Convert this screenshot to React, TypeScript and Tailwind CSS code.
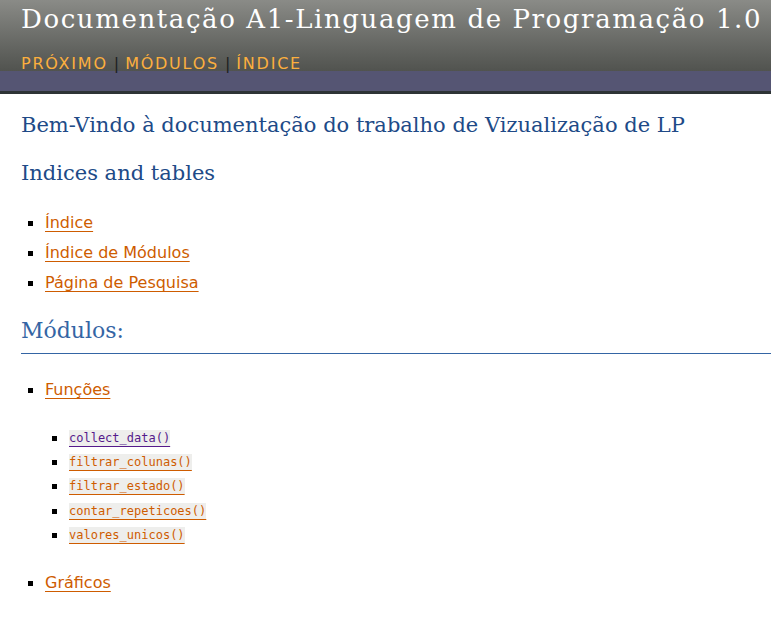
import React from "react";

// --- data ---
const NAV = ["PRÓXIMO", "MÓDULOS", "ÍNDICE"];

const INDICES = ["Índice", "Índice de Módulos", "Página de Pesquisa"];

const FUNCOES = [
  { name: "collect_data()", visited: true },
  { name: "filtrar_colunas()", visited: false },
  { name: "filtrar_estado()", visited: false },
  { name: "contar_repeticoes()", visited: false },
  { name: "valores_unicos()", visited: false },
];

const GRAFICOS = [{ name: "grafico_barras()", visited: false }];

const serif = "font-['DejaVu_Serif',Georgia,serif]";
const sans = "font-['DejaVu_Sans',Verdana,sans-serif]";
const mono = "font-['DejaVu_Sans_Mono',Consolas,monospace]";

const Bullet = () => <span className="inline-block w-[5px] h-[5px] bg-black shrink-0" />;

const CodeList = ({ items }: { items: { name: string; visited: boolean }[] }) => (
  <ul className="mt-[21px] pl-[31px]">
    {items.map((it) => (
      <li key={it.name} className="flex items-center gap-[12px] h-[24.3px]">
        <Bullet />
        <a
          href="#"
          className={`${mono} text-[12px] leading-[17px] bg-[#eeeeec] underline underline-offset-[4px] ${
            it.visited ? "text-[#551a8b]" : "text-[#ce5c00]"
          }`}
        >
          {it.name}
        </a>
      </li>
    ))}
  </ul>
);

const LinkItem = ({ children }: { children: React.ReactNode }) => (
  <li className="flex items-center gap-[12px] h-[30px] pl-[7px]">
    <Bullet />
    <a href="#" className={`${sans} text-[16px] text-[#ce5c00] underline underline-offset-[3px]`}>
      {children}
    </a>
  </li>
);

export default function App() {
  return (
    <div className="min-h-screen bg-white overflow-hidden">
      {/* header */}
      <header>
        <div className="bg-gradient-to-b from-[#8a8b87] to-[#51534f] px-[21px] pt-[1px] h-[71px]">
          <h1 className={`${serif} text-[26px] leading-[36px] tracking-[1.6px] text-white whitespace-nowrap`}>
            Documentação A1-Linguagem de Programação 1.0
          </h1>
          <nav className={`${sans} mt-[17px] text-[16px] leading-[20px] tracking-[0.11em] text-[#fcaf3e] flex items-center`}>
            {NAV.map((n, i) => (
              <React.Fragment key={n}>
                {i > 0 && <span className="text-[#1c1f22] px-[6px] tracking-normal">|</span>}
                <a href="#">{n}</a>
              </React.Fragment>
            ))}
          </nav>
        </div>
        <div className="h-[20px] bg-[#555573]" />
        <div className="h-[3px] bg-[#2e3436]" />
      </header>

      {/* body */}
      <main className="pl-[21px]">
        <h1 className={`${serif} mt-[16px] text-[21px] leading-[30px] text-[#204a87] whitespace-nowrap`}>
          Bem-Vindo à documentação do trabalho de Vizualização de LP
        </h1>

        <h2 className={`${serif} mt-[18px] text-[21px] leading-[30px] text-[#204a87]`}>Indices and tables</h2>

        <ul className="mt-[20px]">
          {INDICES.map((t) => (
            <LinkItem key={t}>{t}</LinkItem>
          ))}
        </ul>

        <h2
          className={`${serif} mt-[18px] text-[22px] leading-[30px] text-[#3465a4] pb-[7px] border-b border-[#3465a4]`}
        >
          Módulos:
        </h2>

        <ul className="mt-[21px]">
          <li>
            <ul>
              <LinkItem>Funções</LinkItem>
            </ul>
            <CodeList items={FUNCOES} />
          </li>
          <li className="mt-[21px]">
            <ul>
              <LinkItem>Gráficos</LinkItem>
            </ul>
            <CodeList items={GRAFICOS} />
          </li>
        </ul>
      </main>
    </div>
  );
}
